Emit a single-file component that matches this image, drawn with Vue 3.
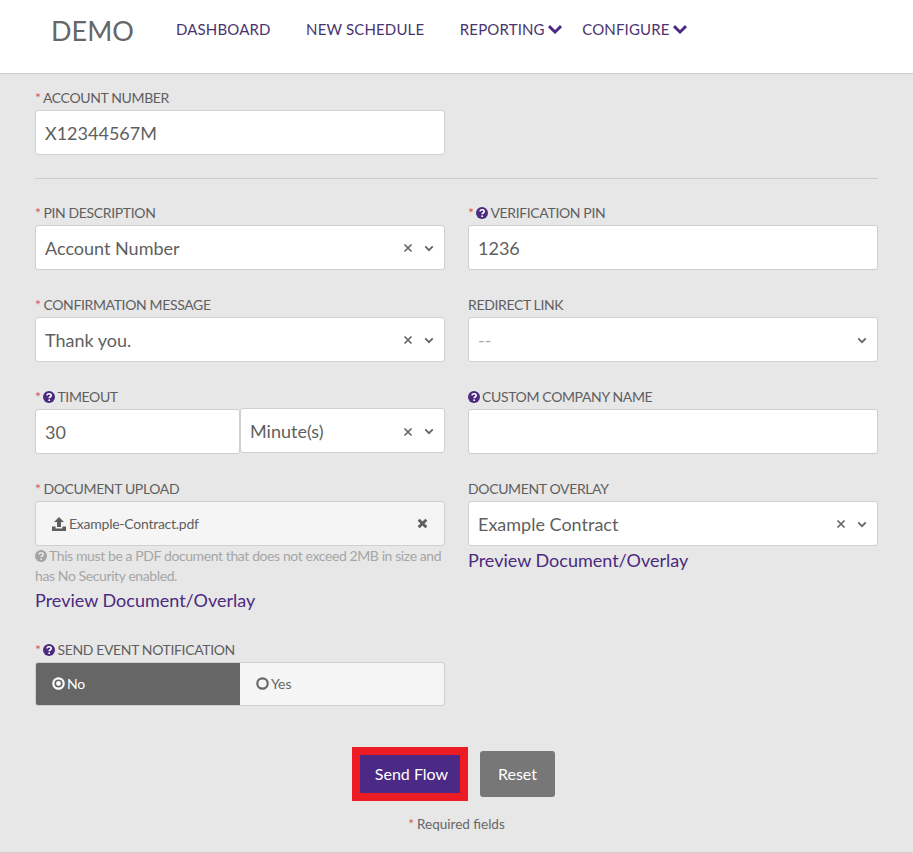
<script setup>
const navChevron = 'M2 0 L7 5 L12 0 L14 2.2 L7 9 L0 2.2 Z'
const help = 'M7 0a7 7 0 1 0 0 14A7 7 0 0 0 7 0Z'
const helpMark = 'M4.6 5.2C4.8 3.9 5.8 3.2 7.1 3.2c1.4 0 2.4.8 2.4 2 0 1.8-2.3 1.8-2.3 3.2'
</script>

<template>
  <div class="page">
    <header class="topbar">
      <div class="brand">DEMO</div>
      <nav class="nav">
        <a class="nav-link">DASHBOARD</a>
        <a class="nav-link">NEW SCHEDULE</a>
        <a class="nav-link drop">REPORTING<svg class="nav-chev" viewBox="0 0 14 9"><path :d="navChevron" /></svg></a>
        <a class="nav-link drop">CONFIGURE<svg class="nav-chev" viewBox="0 0 14 9"><path :d="navChevron" /></svg></a>
      </nav>
    </header>

    <main class="form">
      <div class="row">
        <div class="field">
          <label class="label"><span class="req">*</span> ACCOUNT NUMBER</label>
          <div class="control">X12344567M</div>
        </div>
      </div>

      <hr class="rule" />

      <div class="row">
        <div class="field">
          <label class="label"><span class="req">*</span> PIN DESCRIPTION</label>
          <div class="control select">
            <span class="value">Account Number</span>
            <svg class="clear" viewBox="0 0 10 10"><path d="M1.5 1.5l7 7M8.5 1.5l-7 7" /></svg>
            <svg class="caret" viewBox="0 0 12 8"><path d="M1.5 1.5L6 6l4.5-4.5" /></svg>
          </div>
        </div>
        <div class="field">
          <label class="label"><span class="req">*</span> <svg class="help" viewBox="0 0 14 14"><path :d="help" /><path class="mark" :d="helpMark" /><circle class="dot" cx="7.2" cy="10.7" r="1.1" /></svg>VERIFICATION PIN</label>
          <div class="control">1236</div>
        </div>
      </div>

      <div class="row">
        <div class="field">
          <label class="label"><span class="req">*</span> CONFIRMATION MESSAGE</label>
          <div class="control select">
            <span class="value">Thank you.</span>
            <svg class="clear" viewBox="0 0 10 10"><path d="M1.5 1.5l7 7M8.5 1.5l-7 7" /></svg>
            <svg class="caret" viewBox="0 0 12 8"><path d="M1.5 1.5L6 6l4.5-4.5" /></svg>
          </div>
        </div>
        <div class="field">
          <label class="label">REDIRECT LINK</label>
          <div class="control select">
            <span class="value placeholder">--</span>
            <svg class="caret" viewBox="0 0 12 8"><path d="M1.5 1.5L6 6l4.5-4.5" /></svg>
          </div>
        </div>
      </div>

      <div class="row">
        <div class="field">
          <label class="label"><span class="req">*</span> <svg class="help" viewBox="0 0 14 14"><path :d="help" /><path class="mark" :d="helpMark" /><circle class="dot" cx="7.2" cy="10.7" r="1.1" /></svg>TIMEOUT</label>
          <div class="pair">
            <div class="control">30</div>
            <div class="control select raised">
              <span class="value">Minute(s)</span>
              <svg class="clear" viewBox="0 0 10 10"><path d="M1.5 1.5l7 7M8.5 1.5l-7 7" /></svg>
              <svg class="caret" viewBox="0 0 12 8"><path d="M1.5 1.5L6 6l4.5-4.5" /></svg>
            </div>
          </div>
        </div>
        <div class="field">
          <label class="label"><svg class="help" viewBox="0 0 14 14"><path :d="help" /><path class="mark" :d="helpMark" /><circle class="dot" cx="7.2" cy="10.7" r="1.1" /></svg>CUSTOM COMPANY NAME</label>
          <div class="control"></div>
        </div>
      </div>

      <div class="row docs">
        <div class="field">
          <label class="label"><span class="req">*</span> DOCUMENT UPLOAD</label>
          <div class="control upload">
            <svg class="up-icon" viewBox="0 0 14 14"><path d="M7 0L12 5H9V10H5V5H2ZM0 9.5H3.6V11.5H10.4V9.5H14V14H0Z" /></svg>
            <span class="file">Example-Contract.pdf</span>
            <svg class="remove" viewBox="0 0 10 10"><path d="M1.5 1.5l7 7M8.5 1.5l-7 7" /></svg>
          </div>
          <p class="hint"><svg class="help grey" viewBox="0 0 14 14"><path :d="help" /><path class="mark" :d="helpMark" /><circle class="dot" cx="7.2" cy="10.7" r="1.1" /></svg>This must be a PDF document that does not exceed 2MB in size and has No Security enabled.</p>
          <a class="preview">Preview Document/Overlay</a>
        </div>
        <div class="field">
          <label class="label">DOCUMENT OVERLAY</label>
          <div class="control select">
            <span class="value">Example Contract</span>
            <svg class="clear" viewBox="0 0 10 10"><path d="M1.5 1.5l7 7M8.5 1.5l-7 7" /></svg>
            <svg class="caret" viewBox="0 0 12 8"><path d="M1.5 1.5L6 6l4.5-4.5" /></svg>
          </div>
          <a class="preview">Preview Document/Overlay</a>
        </div>
      </div>

      <div class="row notify">
        <div class="field">
          <label class="label"><span class="req">*</span> <svg class="help" viewBox="0 0 14 14"><path :d="help" /><path class="mark" :d="helpMark" /><circle class="dot" cx="7.2" cy="10.7" r="1.1" /></svg>SEND EVENT NOTIFICATION</label>
          <div class="toggle">
            <div class="opt on">
              <svg class="radio" viewBox="0 0 12 12"><circle cx="6" cy="6" r="4.8" /><circle class="pip" cx="6" cy="6" r="2.2" /></svg>No
            </div>
            <div class="opt">
              <svg class="radio" viewBox="0 0 12 12"><circle cx="6" cy="6" r="4.8" /></svg>Yes
            </div>
          </div>
        </div>
      </div>

      <div class="actions">
        <button class="btn send" type="button">Send Flow</button>
        <button class="btn reset" type="button">Reset</button>
      </div>
      <p class="required"><span class="req">*</span> Required fields</p>
    </main>
  </div>
</template>

<style>
html, body { margin: 0; background: #e7e7e7; }
</style>

<style scoped>
.page {
  width: 913px;
  height: 853px;
  overflow: hidden;
  box-sizing: border-box;
  background: #e7e7e7;
  border-bottom: 1px solid #cfcfcf;
  font-family: Lato, "Liberation Sans", sans-serif;
  color: #555;
}
.topbar {
  box-sizing: border-box;
  height: 74px;
  background: #fff;
  border-bottom: 1px solid #cccccc;
  display: flex;
  align-items: flex-start;
  padding-left: 51px;
}
.brand {
  font-size: 27px;
  line-height: 32px;
  margin-top: 15px;
  width: 107px;
  color: #666;
}
.nav { display: flex; margin-top: 19px; }
.nav-link {
  font-size: 15px;
  line-height: 20px;
  letter-spacing: 0.15px;
  color: #4a3470;
  padding: 0 18px;
  display: flex;
  align-items: center;
  white-space: nowrap;
}
.nav-link + .nav-link { margin-left: -0.5px; }
.nav-link.drop { padding-right: 0; }
.nav-link.drop + .nav-link.drop { padding-left: 21px; }
.nav-chev { width: 14px; height: 9px; margin-left: 3px; fill: #4b2a7f; }
.form { padding: 14px 35px 0; }
.row {
  display: grid;
  grid-template-columns: 410px 410px;
  column-gap: 23px;
  margin-bottom: 25px;
}
.rule {
  border: 0;
  border-top: 1px solid #cdcdcd;
  height: 0;
  margin: -2px 0 24px;
}
.label {
  display: block;
  font-size: 14px;
  line-height: 20px;
  height: 20px;
  margin-bottom: 2px;
  color: #5f5f5f;
  letter-spacing: -0.36px;
  white-space: nowrap;
}
.req { color: #d9534f; margin-right: -0.4px; }
.help {
  width: 12px;
  height: 12px;
  margin-right: 2px;
  vertical-align: -1px;
  fill: #4b2a7f;
}
.help .mark { fill: none; stroke: #fff; stroke-width: 2; }
.help .dot { fill: #fff; }
.help.grey { fill: #a3a3a3; margin-right: 2px; }
.help.grey .mark { stroke: #e7e7e7; }
.help.grey .dot { fill: #e7e7e7; }
.control {
  box-sizing: border-box;
  height: 45px;
  background: #fff;
  border: 1px solid #cfcfcf;
  border-radius: 3px;
  padding: 1px 9px 0;
  font-size: 18px;
  line-height: 43px;
  color: #5f5f5f;
  display: flex;
  align-items: center;
}
.select .value { flex: 1; }
.placeholder { color: #a9a9a9; }
.clear {
  width: 10px;
  height: 10px;
  fill: none;
  stroke: #666;
  stroke-width: 1.7;
  margin-right: 11px;
}
.caret {
  width: 10px;
  height: 7px;
  fill: none;
  stroke: #666;
  stroke-width: 2.2;
  margin-right: 1px;
}
.pair { display: grid; grid-template-columns: 205px 205px; }
.raised { margin-top: -1px; height: 45px; padding-top: 2px; }
.upload { background: #f5f5f5; padding: 0 16px; }
.up-icon { width: 14px; height: 14px; fill: #5f5f5f; margin-right: 3px; }
.file { flex: 1; font-size: 14px; letter-spacing: -0.25px; color: #5f5f5f; }
.remove { width: 11px; height: 11px; fill: none; stroke: #5f5f5f; stroke-width: 2.6; }
.hint {
  margin: 0;
  font-size: 14px;
  line-height: 20px;
  color: #a6a6a6;
  letter-spacing: -0.4px;
}
.preview {
  display: block;
  font-size: 18px;
  line-height: 24px;
  color: #4b2a7f;
  margin-top: 2px;
}
.docs { margin-bottom: 28px; }
.notify { margin-bottom: 0; }
.toggle {
  box-sizing: border-box;
  height: 44px;
  display: grid;
  grid-template-columns: 204px 1fr;
  background: #f5f5f5;
  border: 1px solid #cfcfcf;
  border-radius: 3px;
  overflow: hidden;
  font-size: 14px;
  letter-spacing: -0.1px;
}
.opt {
  display: flex;
  align-items: center;
  padding: 0 0 1px 16px;
  color: #666;
}
.opt.on { background: #666; color: #fff; }
.radio {
  width: 13px;
  height: 13px;
  margin-right: 2px;
  fill: none;
  stroke: currentColor;
  stroke-width: 2;
}
.radio .pip { fill: currentColor; stroke: none; }
.actions {
  display: flex;
  justify-content: center;
  align-items: center;
  gap: 12px;
  margin-top: 41px;
  padding-right: 7px;
}
.btn {
  font-family: Lato, "Liberation Sans", sans-serif;
  font-size: 16px;
  color: #fff;
  cursor: pointer;
}
.send {
  box-sizing: border-box;
  width: 116px;
  height: 54px;
  background: #4b2a85;
  border: 8px solid #ed1c24;
  padding: 0 0 1px 4px;
}
.reset {
  box-sizing: border-box;
  width: 75px;
  height: 46px;
  background: #777;
  border: 0;
  border-radius: 3px;
  padding: 0 0 1px 1px;
}
.required {
  margin: 14px 0 0;
  text-align: center;
  font-size: 13.5px;
  line-height: 18px;
  color: #666;
}
</style>
